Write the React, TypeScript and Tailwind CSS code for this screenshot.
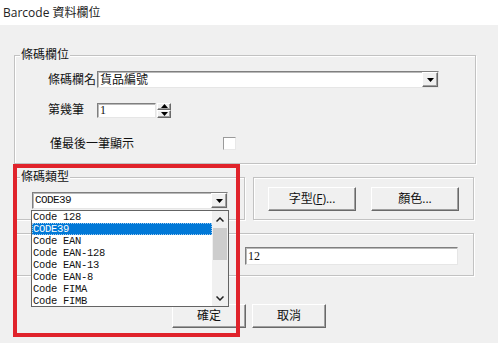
import React from 'react';

// classic win32 bevels
const SUNKEN =
    'border border-t-[#7f7f7f] border-l-[#7f7f7f] border-r-[#e6e6e6] border-b-[#e6e6e6] shadow-[inset_1px_1px_0_#b9b9b9] bg-white';
const RAISED =
    'border border-t-white border-l-white border-r-[#696969] border-b-[#696969] shadow-[inset_-1px_-1px_0_#a0a0a0] bg-[#f0f0f0]';

const DownTri = () => (
    <svg width="7" height="4" viewBox="0 0 7 4">
        <polygon points="0,0 7,0 3.5,4" fill="#000" />
    </svg>
);

const UpTri = () => (
    <svg width="7" height="4" viewBox="0 0 7 4">
        <polygon points="0,4 7,4 3.5,0" fill="#000" />
    </svg>
);

const Chevron = ({ up }: { up?: boolean }) => (
    <svg width="8" height="5" viewBox="0 0 8 5">
        <polyline
            points={up ? '0.5,4.5 4,1 7.5,4.5' : '0.5,0.5 4,4 7.5,0.5'}
            fill="none"
            stroke="#222"
            strokeWidth="1.5"
        />
    </svg>
);

interface GroupProps {
    legend?: string;
    className?: string;
    children?: React.ReactNode;
}

const Group: React.FC<GroupProps> = ({ legend, className, children }) => (
    <div className={`relative border border-[#c2c2c2] shadow-[inset_1px_1px_0_#fff,1px_1px_0_#fff] ${className ?? ''}`}>
        {legend && (
            <span className="absolute -top-[9px] left-[5px] bg-[#f0f0f0] px-px text-[12px] leading-[16px] text-[#111]">
                {legend}
            </span>
        )}
        {children}
    </div>
);

const Button = ({ children, className }: { children: React.ReactNode; className?: string }) => (
    <div className={`${RAISED} flex items-center justify-center text-[12px] text-[#111] ${className ?? ''}`}>
        {children}
    </div>
);

const barcodeTypes = ['Code 128', 'CODE39', 'Code EAN', 'Code EAN-128', 'Code EAN-13', 'Code EAN-8', 'Code FIMA', 'Code FIMB'];

export default function App() {
    return (
        <div className="relative w-[498px] h-[343px] overflow-hidden bg-[#f0f0f0] font-['Open_Sans','Noto_Sans_CJK_TC',sans-serif] text-[#111]">
            {/* title */}
            <div className="h-[25px] bg-white flex items-center pl-[3px] text-[12px] text-[#222]">
                Barcode 資料欄位
            </div>

            <div className="pl-[14px]">
                {/* 條碼欄位 */}
                <Group legend="條碼欄位" className="mt-[30px] w-[462px] h-[109px] pt-[15px]">
                    <div className="flex items-center">
                        <div className="w-[82px] text-right pr-px text-[12px] leading-[16px]">條碼欄名</div>
                        <div className={`${SUNKEN} w-[342px] h-[17px] flex`}>
                            <div className="flex-1 flex items-center pl-[2px] text-[12px] leading-none">貨品編號</div>
                            <div className={`${RAISED} w-[16px] flex items-center justify-center`}>
                                <DownTri />
                            </div>
                        </div>
                    </div>
                    <div className="flex items-center mt-[14px]">
                        <div className="w-[82px] pl-[33px] text-[12px] leading-[16px]">第幾筆</div>
                        <div className={`${SUNKEN} w-[59px] h-[15px] flex items-center pl-[2px] text-[12px] leading-none font-['Liberation_Serif',serif]`}>
                            1
                        </div>
                        <div className="ml-px w-[14px] h-[15px] flex flex-col">
                            <div className={`${RAISED} flex-1 flex items-center justify-center`}>
                                <UpTri />
                            </div>
                            <div className={`${RAISED} flex-1 flex items-center justify-center`}>
                                <DownTri />
                            </div>
                        </div>
                    </div>
                    <div className="flex items-center mt-[19px] h-[13px]">
                        <div className="w-[208px] pl-[35px] text-[12px] leading-[13px]">僅最後一筆顯示</div>
                        <div className="w-[13px] h-[13px] bg-white border border-t-[#9a9a9a] border-l-[#9a9a9a] border-r-[#e8e8e8] border-b-[#e8e8e8]" />
                    </div>
                </Group>

                <div className="flex mt-[13px]">
                    {/* 條碼類型 */}
                    <Group legend="條碼類型" className="w-[231px] h-[43px] pl-[17px] pt-[14px]">
                        <div className={`${SUNKEN} relative w-[196px] h-[17px] flex`}>
                            <div className="flex-1 flex items-center pl-[2px] text-[11px] leading-none tracking-[-0.6px] font-['Liberation_Mono',monospace]">
                                CODE39
                            </div>
                            <div className={`${RAISED} w-[16px] flex items-center justify-center`}>
                                <DownTri />
                            </div>

                            {/* open dropdown list */}
                            <div className="absolute z-10 top-[17px] -left-[2px] w-[198px] h-[97px] bg-white border border-[#646464] flex overflow-hidden">
                                <div className="flex-1">
                                    {barcodeTypes.map((t, i) => (
                                        <div
                                            key={t}
                                            className={`h-[12px] overflow-hidden pl-px text-[10.5px] leading-[12px] tracking-[-0.3px] font-['Liberation_Mono',monospace] whitespace-pre ${
                                                i === 1
                                                    ? 'bg-[#0078d7] text-white outline outline-1 outline-dotted outline-[#9cc8ee] -outline-offset-1'
                                                    : 'text-[#111]'
                                            }`}
                                        >
                                            {t}
                                        </div>
                                    ))}
                                </div>
                                <div className="w-[16px] bg-[#f0f0f0] flex flex-col">
                                    <div className="h-[17px] flex items-center justify-center">
                                        <Chevron up />
                                    </div>
                                    <div className="h-[32px] mx-px bg-[#cdcdcd]" />
                                    <div className="flex-1" />
                                    <div className="h-[16px] flex items-center justify-center">
                                        <Chevron />
                                    </div>
                                </div>
                            </div>
                        </div>
                    </Group>

                    {/* 字型 / 顏色 */}
                    <Group className="ml-[8px] w-[221px] h-[43px] pl-[14px] pt-[9px] flex gap-[15px]">
                        <Button className="w-[88px] h-[24px]">
                            字型(<span className="underline">F</span>)...
                        </Button>
                        <Button className="w-[88px] h-[24px]">顏色...</Button>
                    </Group>
                </div>

                <Group className="mt-[13px] w-[460px] h-[43px] pl-[230px] pt-[13px]">
                    <div className={`${SUNKEN} w-[213px] h-[18px] flex items-center pl-[2px] text-[12px] leading-none font-['Liberation_Serif',serif]`}>
                        12
                    </div>
                </Group>

                <div className="flex gap-[6px] mt-[28px] pl-[158px]">
                    <Button className="w-[74px] h-[24px]">確定</Button>
                    <Button className="w-[74px] h-[24px]">取消</Button>
                </div>
            </div>

            {/* red highlight annotation */}
            <div className="absolute z-20 left-[13px] top-[164px] w-[227px] h-[173px] border-4 border-[#e0232b]" />
        </div>
    );
}
